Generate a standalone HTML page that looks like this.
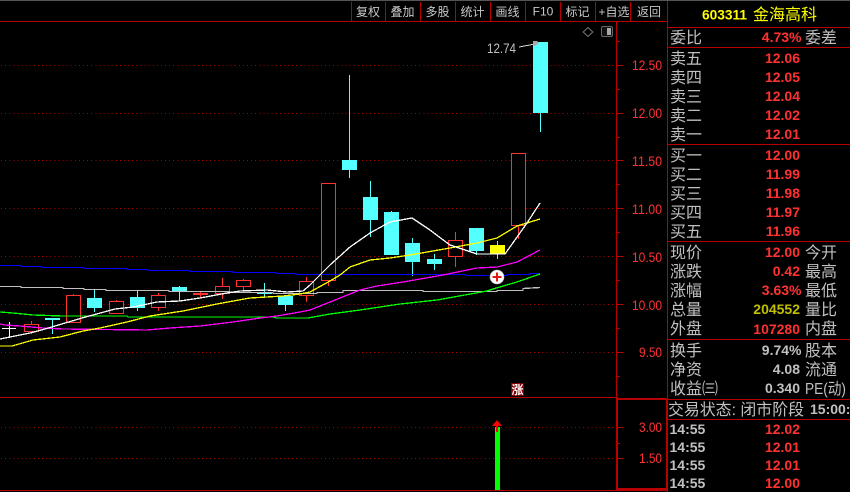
<!DOCTYPE html>
<html><head><meta charset="utf-8">
<style>
html,body{margin:0;padding:0;background:#000;width:850px;height:492px;overflow:hidden}
svg{display:block;position:absolute;left:0;top:0}
text{font-family:"Liberation Sans","WenQuanYi Zen Hei","Noto Sans CJK SC",sans-serif;white-space:pre}
.l{font-size:16px;fill:#c0c0c0}
.v{font-size:14px;font-weight:bold;text-anchor:end}
.r{fill:#ff3232}
.g{fill:#c0c0c0}
.t{font-size:12px;fill:#c8c8c8;text-anchor:middle}
.a{font-size:14px;fill:#ff3232}
</style></head>
<body>
<svg width="850" height="492" viewBox="0 0 850 492" xmlns="http://www.w3.org/2000/svg">
<rect width="850" height="492" fill="#000"/>
<g shape-rendering="crispEdges">
<rect x="0" y="0" width="850" height="1" fill="#555"/>
<!-- dotted grid -->
<g stroke="#a80000" stroke-width="1" stroke-dasharray="1 3.1" fill="none">
<path d="M1 65.5H616M1 113.5H616M1 160.5H616M1 208.5H616M1 256.5H616M1 304.5H616M1 352.5H616M1 427.5H616M1 458.5H616"/>
</g>
<!-- frame -->
<g fill="#b80000">
<rect x="0" y="21" width="667" height="1"/>
<rect x="616" y="22" width="1" height="376"/>
<rect x="667" y="1" width="1" height="491"/>
<rect x="0" y="397" width="616" height="1"/>
<rect x="0" y="490" width="667" height="1"/>
<rect x="616" y="397" width="2" height="94"/>
<rect x="616" y="398" width="52" height="2"/>
<rect x="666" y="398" width="2" height="93"/>
<rect x="616" y="488" width="52" height="2"/>
<rect x="351" y="2" width="1" height="19"/><rect x="385" y="2" width="1" height="19"/><rect x="420" y="2" width="1" height="19"/><rect x="455" y="2" width="1" height="19"/><rect x="490" y="2" width="1" height="19"/><rect x="525" y="2" width="1" height="19"/><rect x="560" y="2" width="1" height="19"/><rect x="595" y="2" width="1" height="19"/><rect x="630" y="2" width="1" height="19"/>
<rect x="668" y="27" width="182" height="1"/>
<rect x="668" y="47" width="182" height="1"/>
<rect x="668" y="144" width="182" height="1"/>
<rect x="668" y="241" width="182" height="1"/>
<rect x="668" y="339" width="182" height="1"/>
<rect x="668" y="399" width="182" height="1"/>
<rect x="668" y="419" width="182" height="1"/>
<!-- ticks -->
<rect x="617" y="65" width="6" height="1"/><rect x="617" y="113" width="6" height="1"/><rect x="617" y="160" width="6" height="1"/><rect x="617" y="208" width="6" height="1"/><rect x="617" y="256" width="6" height="1"/><rect x="617" y="304" width="6" height="1"/><rect x="617" y="352" width="6" height="1"/>
<rect x="617" y="89" width="3" height="1"/><rect x="617" y="137" width="3" height="1"/><rect x="617" y="184" width="3" height="1"/><rect x="617" y="232" width="3" height="1"/><rect x="617" y="280" width="3" height="1"/><rect x="617" y="328" width="3" height="1"/><rect x="617" y="376" width="3" height="1"/><rect x="617" y="41" width="3" height="1"/>
<rect x="617" y="427" width="6" height="1"/><rect x="617" y="458" width="6" height="1"/><rect x="617" y="443" width="3" height="1"/>
</g>
<!-- wicks -->
<path fill="none" stroke="#54ffff" d="M52.5 318V334M94.5 290V312M137.5 291V311M179.5 286V301M264.5 283V297M285.5 296V311M349.5 75V178M370.5 181V237M391.5 211V255M412.5 238V276M434.5 254V270M476.5 228V255M497.5 241V259M540.5 42V132"/>
<path fill="none" stroke="#ffffff" d="M9.5 322V338"/>
<path fill="none" stroke="#ff3232" d="M31.5 321V334M73.5 294V296M116.5 300V302M158.5 293V311M200.5 291V298M222.5 278V299M243.5 279V292M306.5 277V302M328.5 281V286M455.5 232V267M518.5 226V239"/>
<!-- filled -->
<g fill="#54ffff">
<rect x="45" y="318" width="15" height="2"/><rect x="87" y="298" width="15" height="10"/><rect x="130" y="297" width="15" height="11"/><rect x="172" y="287" width="15" height="4"/><rect x="257" y="293" width="15" height="1"/><rect x="278" y="296" width="15" height="9"/><rect x="342" y="160" width="15" height="10"/><rect x="363" y="197" width="15" height="23"/><rect x="384" y="212" width="15" height="43"/><rect x="405" y="243" width="15" height="19"/><rect x="427" y="259" width="15" height="5"/><rect x="469" y="228" width="15" height="23"/><rect x="533" y="42" width="15" height="71"/>
</g>
<rect x="2" y="328" width="14" height="1" fill="#fff"/>
<rect x="193" y="293" width="15" height="2" fill="#ff3232"/>
<rect x="490" y="245" width="15" height="9" fill="#ffff00"/>
<!-- hollow -->
<g fill="#000" stroke="#ff3232">
<rect x="24.5" y="324.5" width="14" height="7"/><rect x="66.5" y="295.5" width="14" height="27"/><rect x="109.5" y="301.5" width="14" height="12"/><rect x="151.5" y="295.5" width="14" height="12"/><rect x="215.5" y="286.5" width="14" height="7"/><rect x="236.5" y="280.5" width="14" height="6"/><rect x="299.5" y="281.5" width="14" height="14"/><rect x="321.5" y="183.5" width="14" height="97"/><rect x="448.5" y="240.5" width="14" height="16"/><rect x="511.5" y="153.5" width="14" height="72"/>
</g>
<!-- MAs -->
<g fill="none" stroke-width="1.3">
<polyline stroke="#0000ff" points="0,265.5 21,265.5 21,266.5 42,266.5 42,267.5 84,267.5 84,268.5 127,268.5 127,269.5 148,269.5 148,270.5 190,270.5 190,271.5 233,271.5 233,272.5 276,272.5 276,273.5 296,273.5 296,274.5 466,274.5 466,275.5 507,275.5 507,274.5 530,274.5 530,273.5 540,273.5"/>
<polyline stroke="#c0c0c0" points="0,286.5 21,286.5 21,287.5 63,287.5 63,288.5 84,288.5 84,289.5 106,289.5 106,290.5 169,290.5 169,291.5 230,291.5 230,292.5 273,292.5 273,293.5 317,293.5 317,292.5 343,292.5 343,290.5 423,290.5 423,291.5 497,291.5 497,290.5 523,290.5 523,288.5 540,287.5"/>
<polyline stroke="#00ff00" points="0,312 13,313 33,315 63,316 127,316 128,317 273,317 277,318 308,318 330,314 360,310 400,304 437,300 487,291 493,289 517,282 540,274"/>
<polyline stroke="#ff00ff" points="0,324 5,325 20,326 43,328 63,329 147,330 170,328 200,326 233,322 260,318 277,316 300,312 310,310 330,302 335,300 360,290 377,286 403,282 443,275 477,268 497,267 517,262 540,250"/>
<polyline stroke="#ffff00" points="0,346 12,346 33,340 60,337 83,331 100,328 127,322 150,316 183,311 217,304 250,298 283,296 300,294 310,292 330,281 340,275 350,267 370,260 390,258 410,255 450,248 477,243 497,238 517,226 540,219"/>
<polyline stroke="#ffffff" points="0,339 30,333 45,329 82,318 93,315 115,309 133,307 157,302 180,301 200,298 227,293 240,291 267,290 287,292 303,291 310,285 330,265 350,247 370,233 390,222 412,218 430,230 450,245 477,254 505,254 527,223 540,203"/>
</g>
<!-- volume bar -->
<rect x="495" y="427" width="5" height="63" fill="#00ff00"/>
</g>
<polygon points="497,420 502,426 492,426" fill="#ff0000"/>
<rect x="496" y="425" width="2" height="7" fill="#ff0000"/>
<!-- plus icon -->
<circle cx="497" cy="277" r="7" fill="#fff" stroke="#bbb" stroke-width=".6"/>
<path d="M497 272.5V281.5M492.5 277H501.5" stroke="#e01818" stroke-width="2" fill="none"/>
<!-- badge -->
<rect x="511" y="383" width="13" height="13" fill="#800000"/>
<text x="517.5" y="394" font-size="12" font-weight="bold" fill="#fff" text-anchor="middle">涨</text>
<!-- top right icons -->
<path d="M588 27.5L592.8 32L588 36.5L583.2 32Z" fill="none" stroke="#777" stroke-width="1"/>
<rect x="601.5" y="26.5" width="11" height="10" rx="1.5" fill="#111" stroke="#666" stroke-width="1"/>
<rect x="607" y="28" width="4" height="7" fill="#aaa"/>
<!-- high label -->
<text x="487" y="53" font-size="14" fill="#c0c0c0" textLength="29" lengthAdjust="spacingAndGlyphs">12.74</text>
<path d="M519 47L535 44" stroke="#d8d8d8" fill="none" shape-rendering="crispEdges"/>
<polygon points="533,41 537,41 539,43 535,46 533,45" fill="#a8a8a8"/>
<!-- axis labels -->
<text class="a" x="632" y="70" textLength="30" lengthAdjust="spacingAndGlyphs">12.50</text>
<text class="a" x="632" y="118" textLength="30" lengthAdjust="spacingAndGlyphs">12.00</text>
<text class="a" x="632" y="166" textLength="30" lengthAdjust="spacingAndGlyphs">11.50</text>
<text class="a" x="632" y="214" textLength="30" lengthAdjust="spacingAndGlyphs">11.00</text>
<text class="a" x="632" y="262" textLength="30" lengthAdjust="spacingAndGlyphs">10.50</text>
<text class="a" x="632" y="310" textLength="30" lengthAdjust="spacingAndGlyphs">10.00</text>
<text class="a" x="639" y="357" textLength="23" lengthAdjust="spacingAndGlyphs">9.50</text>
<text class="a" x="639" y="432" textLength="23" lengthAdjust="spacingAndGlyphs">3.00</text>
<text class="a" x="639" y="463" textLength="23" lengthAdjust="spacingAndGlyphs">1.50</text>
<!-- toolbar -->
<text class="t" x="368" y="16">复权</text>
<text class="t" x="402.5" y="16">叠加</text>
<text class="t" x="437.5" y="16">多股</text>
<text class="t" x="472.5" y="16">统计</text>
<text class="t" x="507.5" y="16">画线</text>
<text class="t" x="543" y="15.5">F10</text>
<text class="t" x="577.5" y="16">标记</text>
<text class="t" x="614" y="16">+自选</text>
<text class="t" x="649" y="16">返回</text>
<!-- title -->
<text x="702" y="19.5" font-size="14" font-weight="bold" fill="#ffff00" textLength="45" lengthAdjust="spacingAndGlyphs">603311</text>
<text x="753" y="20" font-size="16" fill="#ffff00">金海高科</text>
<!-- labels left -->
<g class="l">
<text x="670" y="43">委比</text>
<text x="670" y="64">卖五</text><text x="670" y="83">卖四</text><text x="670" y="102">卖三</text><text x="670" y="121">卖二</text><text x="670" y="140">卖一</text>
<text x="670" y="161">买一</text><text x="670" y="180">买二</text><text x="670" y="199">买三</text><text x="670" y="218">买四</text><text x="670" y="237">买五</text>
<text x="670" y="258">现价</text><text x="670" y="277">涨跌</text><text x="670" y="296">涨幅</text><text x="670" y="315">总量</text><text x="670" y="334">外盘</text>
<text x="670" y="356">换手</text><text x="670" y="375">净资</text><text x="670" y="394">收益㈢</text>
<text x="805" y="43">委差</text>
<text x="805" y="258">今开</text><text x="805" y="277">最高</text><text x="805" y="296">最低</text><text x="805" y="315">量比</text><text x="805" y="334">内盘</text>
<text x="805" y="356">股本</text><text x="805" y="375">流通</text><text x="805" y="394" textLength="41" lengthAdjust="spacingAndGlyphs">PE(动)</text>
<text x="668" y="415" textLength="136" lengthAdjust="spacingAndGlyphs">交易状态: 闭市阶段</text>
</g>
<!-- values -->
<g>
<text class="v r" x="801.5" y="42">4.73%</text>
<text class="v r" x="800" y="63">12.06</text><text class="v r" x="800" y="82">12.05</text><text class="v r" x="800" y="101">12.04</text><text class="v r" x="800" y="120">12.02</text><text class="v r" x="800" y="139">12.01</text>
<text class="v r" x="800" y="160">12.00</text><text class="v r" x="800" y="179">11.99</text><text class="v r" x="800" y="198">11.98</text><text class="v r" x="800" y="217">11.97</text><text class="v r" x="800" y="236">11.96</text>
<text class="v r" x="800" y="257">12.00</text><text class="v r" x="800" y="276">0.42</text><text class="v r" x="801.5" y="295">3.63%</text>
<text class="v" x="800" y="314" fill="#c0c000">204552</text>
<text class="v r" x="800" y="334">107280</text>
<text class="v g" x="801.5" y="355">9.74%</text><text class="v g" x="800" y="374">4.08</text><text class="v g" x="800" y="393">0.340</text>
<text x="810" y="414" font-size="14" font-weight="bold" fill="#c0c0c0">15:00:</text>
<text x="669.5" y="434" font-size="14" font-weight="bold" fill="#c0c0c0">14:55</text>
<text x="669.5" y="452" font-size="14" font-weight="bold" fill="#c0c0c0">14:55</text>
<text x="669.5" y="470" font-size="14" font-weight="bold" fill="#c0c0c0">14:55</text>
<text x="669.5" y="488" font-size="14" font-weight="bold" fill="#c0c0c0">14:55</text>
<text class="v r" x="800" y="434">12.02</text><text class="v r" x="800" y="452">12.01</text><text class="v r" x="800" y="470">12.01</text><text class="v r" x="800" y="488">12.00</text>
</g>
</svg>
</body></html>
